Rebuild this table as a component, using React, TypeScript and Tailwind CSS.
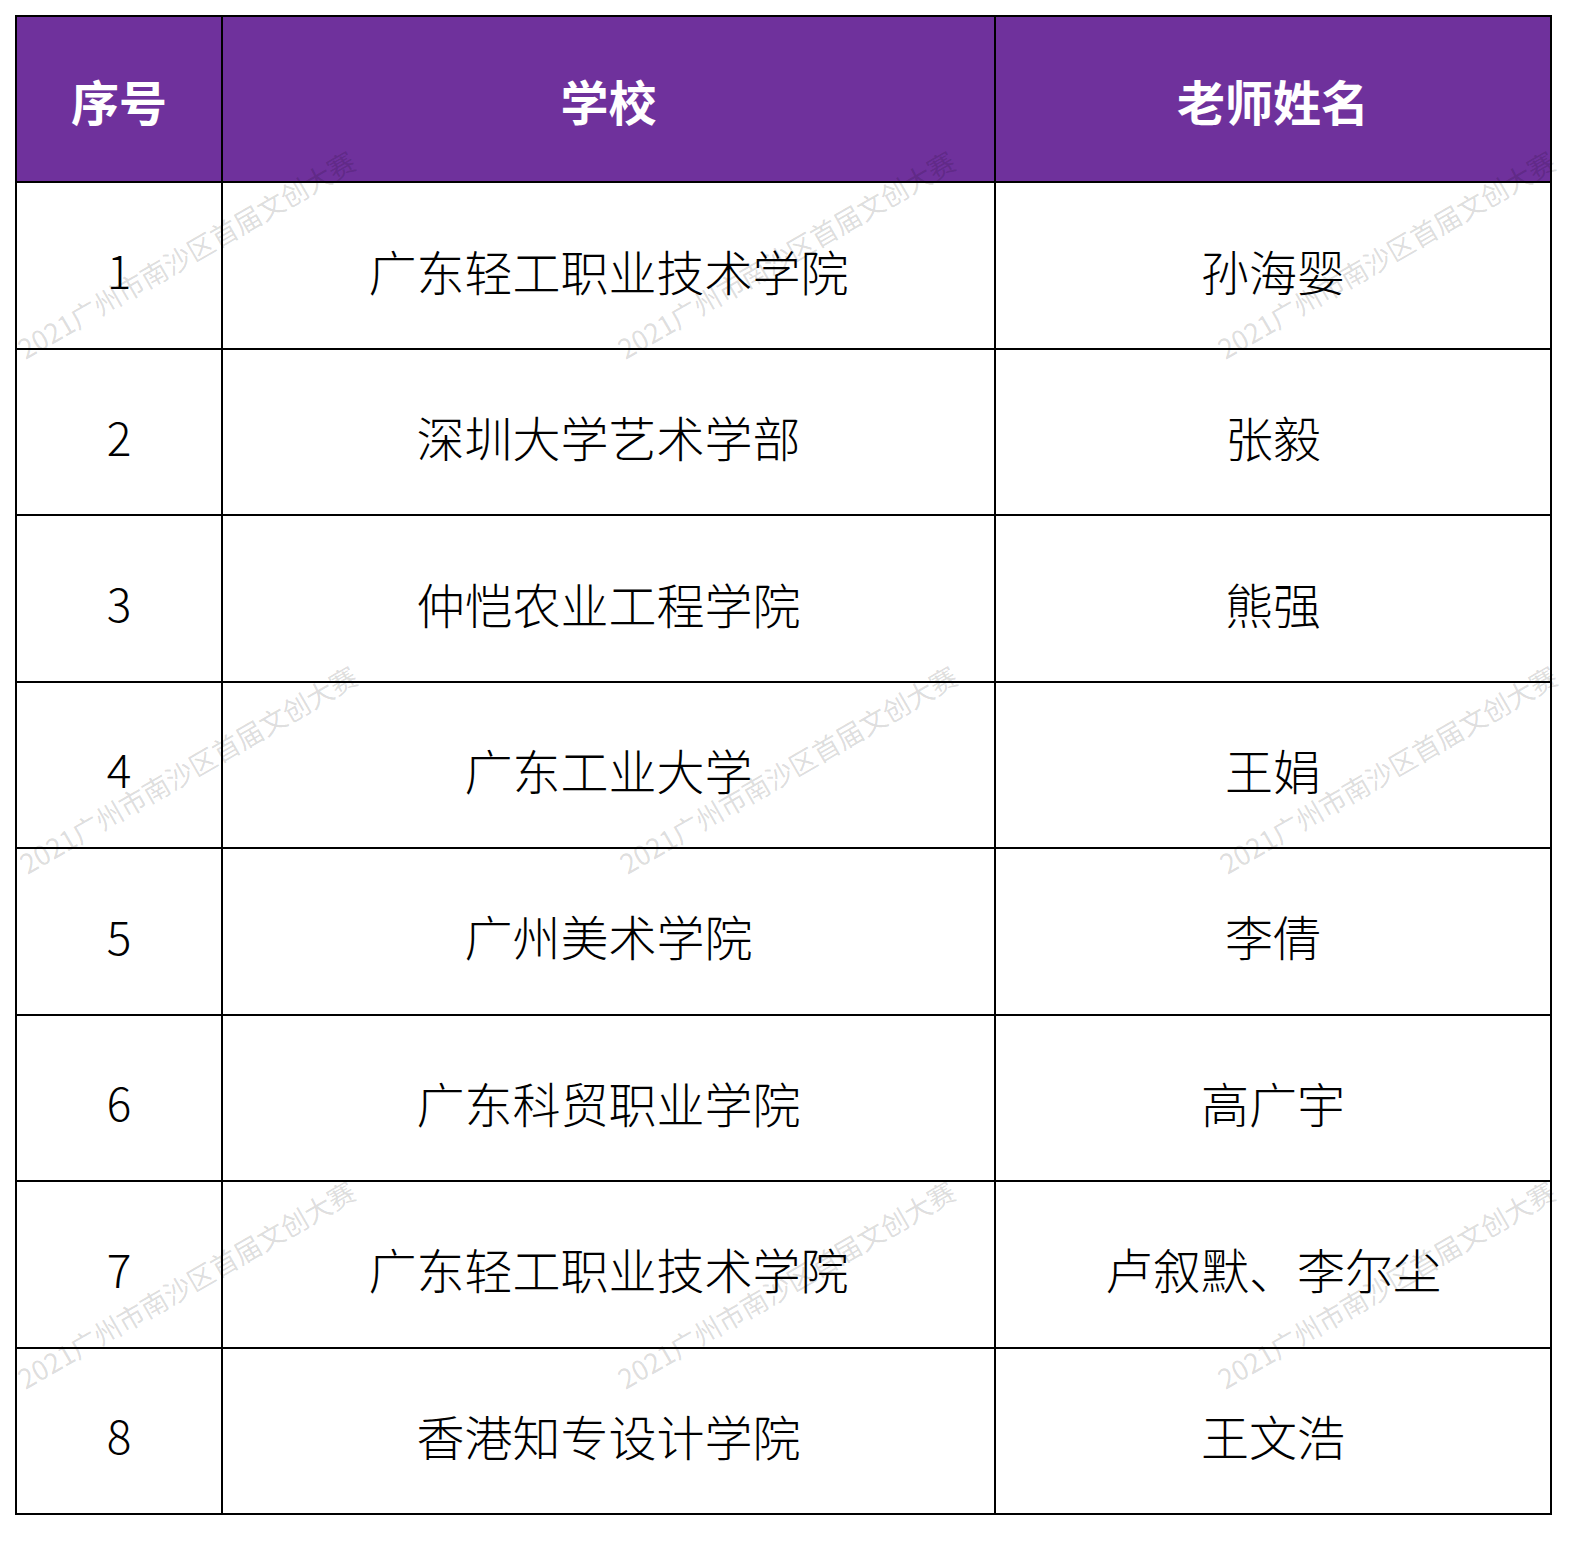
import React from 'react';

const rows = [
  ['1', '广东轻工职业技术学院', '孙海婴'],
  ['2', '深圳大学艺术学部', '张毅'],
  ['3', '仲恺农业工程学院', '熊强'],
  ['4', '广东工业大学', '王娟'],
  ['5', '广州美术学院', '李倩'],
  ['6', '广东科贸职业学院', '高广宇'],
  ['7', '广东轻工职业技术学院', '卢叙默、李尔尘'],
  ['8', '香港知专设计学院', '王文浩'],
];

// watermark centers
const marks = [
  [186, 254], [786, 254], [1386, 254],
  [188, 769], [788, 769], [1388, 769],
  [186, 1284], [786, 1284], [1386, 1284],
];

const cell = 'flex items-center justify-center border-r-2 border-b-2 border-black';

export default function App() {
  return (
    <div
      className="relative w-[1582px] h-[1544px] bg-white overflow-hidden"
      style={{ fontFamily: '"Noto Sans CJK SC", "Noto Sans", sans-serif' }}
    >
      <div className="pt-[15px] pl-[15px]">
        <div className="grid w-[1537px] grid-cols-[206px_773px_556px] grid-rows-[repeat(9,166.44px)] border-l-2 border-t-2 border-black">
          <div className={`${cell} bg-[#6f319c] text-white text-[48px] font-bold pt-[2px]`}>序号</div>
          <div className={`${cell} bg-[#6f319c] text-white text-[48px] font-bold pt-[2px]`}>学校</div>
          <div className={`${cell} bg-[#6f319c] text-white text-[48px] font-bold pt-[2px]`}>老师姓名</div>
          {rows.map((r) => (
            <React.Fragment key={r[0]}>
              <div className={`${cell} text-black text-[46px] font-light pt-[8px]`}>{r[0]}</div>
              <div className={`${cell} text-black text-[48px] font-light pt-[8px]`}>{r[1]}</div>
              <div className={`${cell} text-black text-[48px] font-light pt-[8px]`}>{r[2]}</div>
            </React.Fragment>
          ))}
        </div>
      </div>

      {/* watermarks */}
      {marks.map(([x, y], i) => (
        <div
          key={i}
          className="absolute whitespace-nowrap text-[27px] leading-none text-black/15 -translate-x-1/2 -translate-y-1/2 rotate-[-30deg] pointer-events-none"
          style={{ left: x, top: y }}
        >
          2021广州市南沙区首届文创大赛
        </div>
      ))}
    </div>
  );
}
